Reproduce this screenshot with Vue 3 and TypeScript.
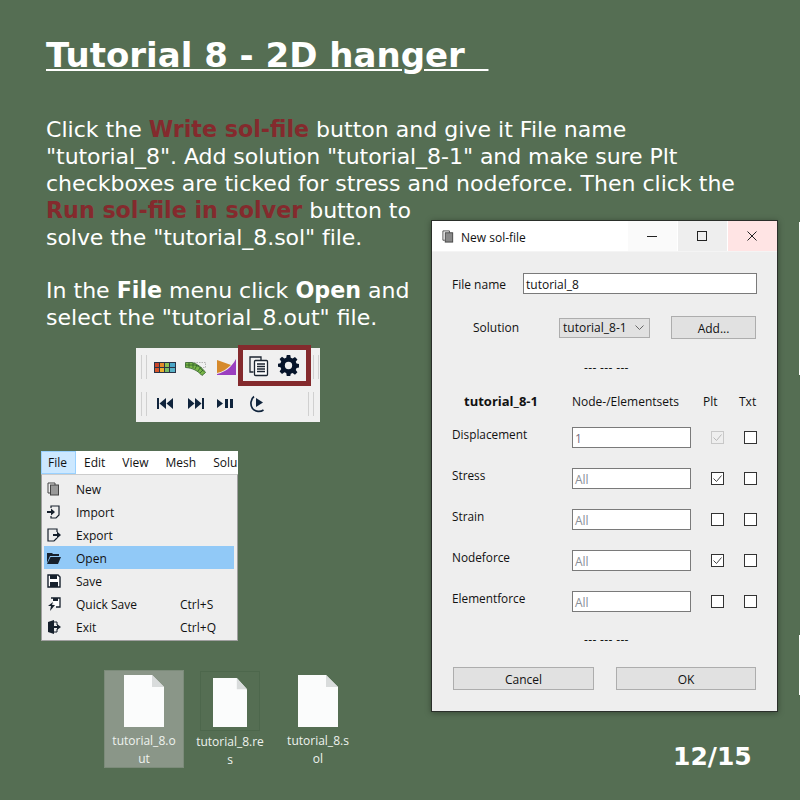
<script setup lang="ts">
interface Row { label: string; value: string; plt: 'on' | 'off' | 'disabled'; dark?: boolean }
const rows: Row[] = [
  { label: 'Displacement', value: '1', plt: 'disabled', dark: true },
  { label: 'Stress', value: 'All', plt: 'on' },
  { label: 'Strain', value: 'All', plt: 'off' },
  { label: 'Nodeforce', value: 'All', plt: 'on' },
  { label: 'Elementforce', value: 'All', plt: 'off' },
]
const menu = [
  { label: 'New', key: '', icon: 'new' },
  { label: 'Import', key: '', icon: 'import' },
  { label: 'Export', key: '', icon: 'export' },
  { label: 'Open', key: '', icon: 'open', active: true },
  { label: 'Save', key: '', icon: 'save' },
  { label: 'Quick Save', key: 'Ctrl+S', icon: 'quick' },
  { label: 'Exit', key: 'Ctrl+Q', icon: 'exit' },
]
const files = [
  { a: 'tutorial_8.o', b: 'ut', cls: 'selected' },
  { a: 'tutorial_8.re', b: 's', cls: 'focused' },
  { a: 'tutorial_8.s', b: 'ol', cls: 'plain' },
]
</script>

<template>
  <main class="slide">
    <h1 class="title">Tutorial 8 - 2D hanger&nbsp;&nbsp;</h1>
    <p class="para first">Click the <b class="red">Write sol-file</b> button and give it File name<br><span class="tight">"tutorial_8". Add solution "tutorial_8-1" and make sure Plt</span><br>checkboxes are ticked for stress and nodeforce. Then click the<br><b class="red">Run sol-file in solver</b> button to<br><span class="tight">solve the "tutorial_8.sol" file.</span></p>
    <p class="para second">In the <b>File</b> menu click <b>Open</b> and<br>select the "tutorial_8.out" file.</p>

    <div class="toolbar">
      <div class="tool-row">
        <i class="grip"></i>
        <svg class="t-heat" width="22" height="11" viewBox="0 0 22 11"><rect width="22" height="11" fill="#2a3346"/><rect x="1" y="1" width="4" height="4" fill="#c9452a"/><rect x="6" y="1" width="4" height="4" fill="#e3892a"/><rect x="11" y="1" width="4" height="4" fill="#8cc152"/><rect x="16" y="1" width="5" height="4" fill="#4aa6c8"/><rect x="1" y="6" width="4" height="4" fill="#d9572a"/><rect x="6" y="6" width="4" height="4" fill="#eab02f"/><rect x="11" y="6" width="4" height="4" fill="#78bb63"/><rect x="16" y="6" width="5" height="4" fill="#58b2c8"/></svg>
        <svg class="t-mesh" width="21" height="14" viewBox="0 0 21 14"><path d="M9 .5h11.500v5H14" fill="none" stroke="#b5b5b5" stroke-dasharray="1.500 1"/><path d="M.5.500H7C12 1.500 17.500 6 20.500 10.500L17 13.500C13 9 8 6 .5 5.500z" fill="#7ab648" stroke="#2f5d2a" stroke-width=".8"/><path d="M4 .5v5M8 1v5M12 3l-2 4M15.500 5.500L13 9M18 8l-3 3M.5 3h9.500l4 1.500 4.500 5" fill="none" stroke="#2f5d2a" stroke-width=".8"/></svg>
        <svg class="t-area" width="19" height="16" viewBox="0 0 19 16"><path d="M0 1l14 5C10 10 5 13 0 14z" fill="#d68a2c"/><path d="M0 15C8 13 14 9 19 0v16H0z" fill="#9a3fc0"/></svg>
        <svg class="t-write" width="20" height="21" viewBox="0 0 20 21"><path d="M4.500 16H1V1h11v3" fill="none" stroke="#1c2530" stroke-width="1.300"/><rect x="5.500" y="4.500" width="13" height="15" rx="1" fill="#fff" stroke="#1c2530" stroke-width="1.300"/><path d="M8 8h8M8 10.500h8M8 13h8M8 15.500h8" stroke="#1c2530" stroke-width="1.300"/></svg>
        <svg class="t-gear" width="21" height="21" viewBox="0 0 24 24"><path fill="#06142a" fill-rule="evenodd" d="M10 0h4l.6 3.200 2.100.9L19.400 2.200l2.800 2.800-1.900 2.700.9 2.100L24 10.400v3.900l-2.800.6-.9 2.100 1.900 2.700-2.800 2.800-2.700-1.900-2.100.9L14 24h-4l-.6-3.400-2.100-.9-2.700 1.900-2.800-2.800 1.900-2.700-.9-2.100L0 13.500V10l2.800-.5.900-2.100L1.800 4.700 4.600 2l2.700 1.900 2.100-.9zM12 7.800a4.200 4.200 0 1 0 0 8.400 4.200 4.200 0 0 0 0-8.400z"/></svg>
        <i class="grip t-end"></i>
      </div>
      <div class="tool-row">
        <i class="grip"></i>
        <svg class="b-back" width="16" height="11" viewBox="0 0 16 11"><path fill="#10243c" d="M0 0h2v11H0zM9 0v11L2.500 5.500zM16 0v11L9.500 5.500z"/></svg>
        <svg class="b-fwd" width="16" height="11" viewBox="0 0 16 11"><path fill="#10243c" d="M14 0h2v11h-2zM7 0v11l6.500-5.500zM0 0v11l6.500-5.500z"/></svg>
        <svg class="b-pp" width="17" height="9" viewBox="0 0 17 9"><path fill="#10243c" d="M0 0v9l6-4.500zM8 0h3v9H8zM13 0h3v9h-3z"/></svg>
        <svg class="b-clock" width="16" height="18" viewBox="0 0 16 18"><path d="M4 1.500C.5 4 0 10 2.500 13.500c3 3.500 8 3.500 11 1.500" fill="none" stroke="#10243c" stroke-width="1.700"/><path fill="#10243c" d="M6 3v9l7-4.500z"/></svg>
        <i class="grip b-end"></i>
      </div>
      <div class="highlight"></div>
    </div>

    <div class="menu-shot">
      <div class="menubar">
        <span class="bar-item open">File</span><span class="bar-item">Edit</span><span class="bar-item">View</span><span class="bar-item">Mesh</span><span class="bar-item">Solu</span>
      </div>
      <ul class="menu">
        <li v-for="m in menu" :key="m.label" class="menu-item" :class="{ active: m.active }">
          <svg class="menu-ic" width="14" height="14" viewBox="0 0 14 14">
            <g v-if="m.icon === 'new'"><path d="M3 11H1V1h7v2" fill="none" stroke="#444"/><rect x="3.500" y="3" width="8" height="10" fill="#999" stroke="#444"/></g>
            <g v-else-if="m.icon === 'import'"><path d="M4 3V1h8v9l-3 3H4v-2" fill="none" stroke="#16202c" stroke-width="1.200"/><path d="M0 6h4V3.500L8 7l-4 3.500V8H0z" fill="#16202c"/></g>
            <g v-else-if="m.icon === 'export'"><path d="M10 4V1H1v12h6l3-3" fill="none" stroke="#16202c" stroke-width="1.200"/><path d="M6 6h4V3.500L14 7l-4 3.500V8H6z" fill="#16202c"/></g>
            <g v-else-if="m.icon === 'open'"><path d="M0 2h5l1 1h6v2H3L0 12z" fill="#16202c"/><path d="M3.500 6H14l-3 7H0z" fill="#16202c"/></g>
            <g v-else-if="m.icon === 'save'"><path d="M1 1h10l2 2v10H1z" fill="#fff" stroke="#16202c" stroke-width="1.400"/><rect x="3" y="1" width="7" height="4" fill="#16202c"/><rect x="3" y="8" width="8" height="5" fill="#16202c"/></g>
            <g v-else-if="m.icon === 'quick'"><path d="M4 1h9v9H9" fill="#fff" stroke="#16202c" stroke-width="1.300"/><rect x="6" y="1" width="5" height="3" fill="#16202c"/><path d="M6 5L1 9h3l-1 5 5-6H5z" fill="#16202c"/></g>
            <g v-else><path d="M1 2l6-2v14l-6-2z" fill="#16202c"/><path d="M7 2h3v3M10 9v3H7" fill="none" stroke="#16202c"/><path d="M7 6h3V4l4 3-4 3V8H7z" fill="#16202c"/></g>
          </svg>
          <span class="menu-label">{{ m.label }}</span>
          <span class="menu-key">{{ m.key }}</span>
        </li>
      </ul>
    </div>

    <div class="files">
      <div v-for="f in files" :key="f.a" class="file" :class="f.cls">
        <svg class="doc" :width="f.cls === 'focused' ? 34 : 40" :height="f.cls === 'focused' ? 49 : 52" viewBox="0 0 40 52" preserveAspectRatio="none">
          <path d="M0 0h28l12 12v40H0z" fill="#fbfcfc"/>
          <path d="M28 0l12 12H28z" fill="#d9dcdc"/>
        </svg>
        <span class="fname">{{ f.a }}<br>{{ f.b }}</span>
      </div>
    </div>

    <section class="dialog">
      <header class="titlebar">
        <svg width="13" height="13" viewBox="0 0 14 14"><path d="M3 11H1V1h7v2" fill="none" stroke="#444"/><rect x="3.500" y="3" width="8" height="10" fill="#888" stroke="#444"/></svg>
        <span class="win-title">New sol-file</span>
        <div class="win-btns">
          <span class="wb min"><i></i></span>
          <span class="wb max"><i></i></span>
          <span class="wb close">
            <svg width="10" height="10" viewBox="0 0 10 10"><path d="M.5.500l9 9M9.500.500l-9 9" stroke="#222" fill="none"/></svg>
          </span>
        </div>
      </header>
      <div class="dlg-body">
        <div class="line file-line">
          <label>File name</label>
          <span class="input name-input">tutorial_8</span>
        </div>
        <div class="line sol-line">
          <label>Solution</label>
          <span class="combo">tutorial_8-1
            <svg width="9" height="5" viewBox="0 0 9 5"><path d="M.5.500l4 4 4-4" fill="none" stroke="#666"/></svg>
          </span>
          <span class="btn add">Add...</span>
        </div>
        <div class="dashes">--- --- ---</div>
        <div class="grid head">
          <b class="sol-name">tutorial_8-1</b>
          <span>Node-/Elementsets</span>
          <span class="h-plt">Plt</span>
          <span class="h-txt">Txt</span>
        </div>
        <div v-for="r in rows" :key="r.label" class="grid row">
          <span class="row-label">{{ r.label }}</span>
          <span class="input set" :class="{ dark: r.dark }">{{ r.value }}</span>
          <span class="c-plt">
            <span class="check" :class="r.plt">
              <svg v-if="r.plt !== 'off'" width="11" height="11" viewBox="0 0 11 11"><path d="M1.500 5.500l3 3 5-6" fill="none" :stroke="r.plt === 'disabled' ? '#b8b8b8' : '#444'"/></svg>
            </span>
          </span>
          <span><span class="check off"></span></span>
        </div>
        <div class="dashes lower">--- --- ---</div>
        <div class="footer">
          <span class="btn cancel">Cancel</span>
          <span class="btn ok">OK</span>
        </div>
      </div>
    </section>

    <i class="edge e1"></i>
    <i class="edge e2"></i>
    <div class="page">12/15</div>
  </main>
</template>

<style>
html, body { margin: 0; padding: 0; }
</style>

<style scoped>
.slide {
  position: relative;
  box-sizing: border-box;
  width: 800px;
  height: 800px;
  overflow: hidden;
  padding: 36px 0 0 46px;
  background: #556e53;
  color: #fff;
  font-family: "DejaVu Sans", sans-serif;
}
.title {
  display: inline-block;
  margin: 0;
  font-size: 34px;
  line-height: 38px;
  font-weight: 700;
  text-decoration: underline;
  text-decoration-thickness: 2px;
  text-underline-offset: 2px;
  white-space: nowrap;
}
.para {
  margin: 0;
  font-size: 22.05px;
  line-height: 27px;
  white-space: nowrap;
  color: #fff;
}
.para b { font-size: 22.2px; }
.tight { letter-spacing: -.07px; }
.first { margin-top: 42px; }
.second { margin-top: 26px; }
.red { color: #842a2d; }
.toolbar {
  position: relative;
  display: flex;
  flex-direction: column;
  width: 184px;
  height: 74px;
  margin: 17px 0 0 90px;
  background: #f0f0f0;
}
.tool-row { display: flex; align-items: center; height: 37px; padding-left: 5px; }
.grip {
  flex: none;
  box-sizing: border-box;
  width: 6px;
  height: 24px;
  border-left: 1px solid #d0d0d0;
  border-right: 1px solid #d0d0d0;
}
.t-heat { margin: 1px 0 0 7px; }
.t-mesh { margin: 4px 0 0 9px; }
.t-area { margin: 1px 0 0 11px; }
.t-write { margin: -1px 0 0 13px; }
.t-gear { margin: -3px 0 0 9px; }
.t-end { margin-left: 14px; }
.b-back { margin-left: 10px; }
.b-fwd { margin-left: 15px; }
.b-pp { margin-left: 13px; }
.b-clock { margin-left: 16px; }
.b-end { margin-left: 42px; }
.highlight {
  position: absolute;
  left: 102px;
  top: -3px;
  box-sizing: border-box;
  width: 73px;
  height: 41px;
  border: 5px solid #842a2d;
}
.menu-shot {
  width: 197px;
  margin: 29px 0 0 -5px;
  font-family: "Open Sans", "Noto Sans", sans-serif;
  font-size: 12px;
  color: #111;
}
.menubar {
  display: flex;
  height: 23px;
  background: #fff;
  overflow: hidden;
  white-space: nowrap;
}
.bar-item { display: flex; align-items: center; padding: 0 9px 0 8px; }
.bar-item.open { background: #cce8ff; border: 1px solid #99d1ff; box-sizing: border-box; width: 35px; padding-left: 6px; }
.menu {
  list-style: none;
  margin: 0;
  padding: 2px 3px 2px 2px;
  background: #eeeeee;
  border: 1px solid #a0a0a0;
  border-top: 1px solid #ccc;
  height: 167px;
  box-sizing: border-box;
}
.menu-item { display: flex; align-items: center; height: 23px; }
.menu-item.active { background: #91c9f7; }
.menu-ic { margin: 0 0 0 3px; flex: none; }
.menu-label { margin-left: 15px; width: 104px; padding-top: 1px; }
.menu-key { white-space: nowrap; padding-top: 1px; }
.files {
  display: flex;
  align-items: flex-start;
  margin: 29px 0 0 58px;
  font-family: "Open Sans", "Noto Sans", sans-serif;
  font-size: 12px;
}
.file {
  box-sizing: border-box;
  display: flex;
  flex-direction: column;
  align-items: center;
  color: #eef2ee;
}
.doc { flex: none; }
.fname { margin-top: 5px; line-height: 18px; text-align: center; white-space: nowrap; }
.file.selected {
  width: 80px;
  height: 98px;
  padding-top: 4px;
  margin-right: 16px;
  background: #8a9688;
  border: 1px solid #7c8b7a;
}
.file.focused { position: relative; width: 60px; padding-top: 8px; margin-right: 26px; }
.file.focused .fname { margin-top: 6px; }
.file.focused::before {
  content: "";
  position: absolute;
  left: 0;
  top: 1px;
  box-sizing: border-box;
  width: 60px;
  height: 60px;
  border: 1px solid #4d674c;
}
.file.plain { width: 64px; padding-top: 5px; }
.dialog {
  position: absolute;
  left: 431px;
  top: 220px;
  width: 347px;
  height: 492px;
  box-sizing: border-box;
  border: 1px solid #2a2f2a;
  box-shadow: 0 1px 6px rgba(0, 0, 0, .35);
  background: #eeeeee;
  font-family: "Open Sans", "Noto Sans", sans-serif;
  font-size: 12px;
  color: #111;
}
.titlebar {
  display: flex;
  align-items: center;
  height: 31px;
  background: #fff;
  padding-left: 10px;
  border-bottom: 1px solid #f4f4f4;
  box-sizing: border-box;
}
.win-title { margin-left: 6px; padding-top: 2px; }
.win-btns { display: flex; margin-left: auto; height: 30px; }
.wb { display: flex; align-items: center; justify-content: center; box-sizing: border-box; width: 49px; margin-left: 1px; padding-right: 2px; }
.min { background: #fafafa; }
.min i { width: 10px; height: 1px; background: #222; }
.max { background: #eeeeee; }
.max i { width: 8px; height: 8px; border: 1px solid #222; }
.close { background: #ffe4e4; }
.dlg-body { padding: 21px 20px 0 20px; }
.line { display: flex; align-items: center; }
.file-line label { width: 71px; padding-top: 2px; }
.input {
  display: flex;
  align-items: center;
  box-sizing: border-box;
  height: 21px;
  padding: 2px 2px 0;
  background: #fff;
  border: 1px solid #7a7a7a;
  white-space: nowrap;
}
.name-input { width: 234px; }
.sol-line { margin-top: 22px; }
.sol-line label { width: 86px; margin-left: 21px; }
.combo {
  display: flex;
  align-items: center;
  justify-content: space-between;
  box-sizing: border-box;
  width: 91px;
  height: 20px;
  padding: 0 5px 0 3px;
  background: #e1e1e1;
  border: 1px solid #adadad;
  white-space: nowrap;
}
.btn {
  display: flex;
  align-items: center;
  justify-content: center;
  box-sizing: border-box;
  padding-top: 1px;
  background: #e1e1e1;
  border: 1px solid #adadad;
}
.add { width: 85px; height: 23px; margin-left: 21px; }
.dashes { margin: 21px 0 0 132px; height: 16px; line-height: 16px; letter-spacing: .35px; white-space: nowrap; }
.grid {
  display: grid;
  grid-template-columns: 120px 119px 53px 33px;
  align-items: center;
}
.head { margin-top: 16px; height: 17px; white-space: nowrap; }
.sol-name { padding-left: 12px; font-weight: 700; font-size: 13px; }
.h-plt { padding-left: 12px; }
.h-txt { margin-left: -5px; }
.c-plt { padding-left: 20px; }
.row { height: 21px; margin-top: 20px; }
.head + .row { margin-top: 18px; }
.row-label { margin-top: -8px; white-space: nowrap; font-size: 11.8px; }
.set { color: #8a8f98; width: 119px; }
.set.dark { color: #7a6f80; }
.check {
  display: flex;
  align-items: center;
  justify-content: center;
  box-sizing: border-box;
  width: 13px;
  height: 13px;
  background: #fff;
  border: 1px solid #333;
}
.check.disabled { background: #eeeeee; border-color: #c8c8c8; }
.lower { margin-top: 20px; }
.footer { display: flex; justify-content: space-between; margin: 19px 1px 0; }
.cancel { width: 141px; height: 23px; }
.ok { width: 140px; height: 23px; }
.edge { position: absolute; left: 799px; width: 1px; background: #fff; }
.e1 { top: 222px; height: 153px; }
.e2 { top: 635px; height: 60px; }
.page {
  position: absolute;
  left: 673px;
  top: 743px;
  font-size: 25px;
  line-height: 28px;
  font-weight: 700;
}
</style>
